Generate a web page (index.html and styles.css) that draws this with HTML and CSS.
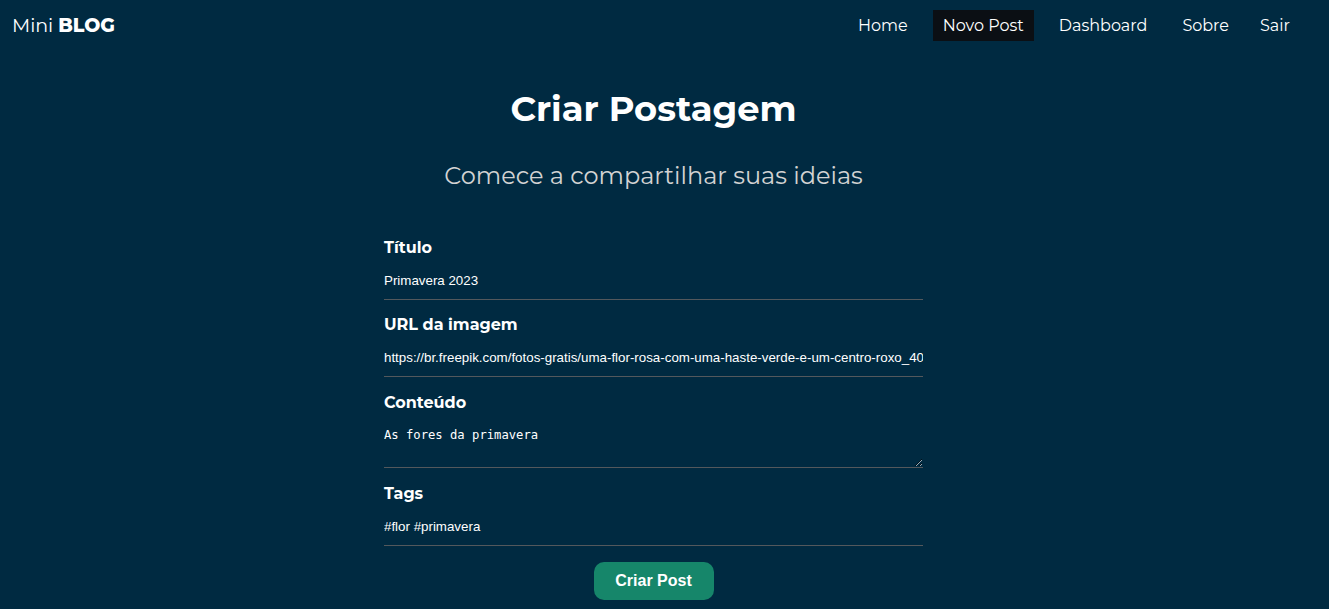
FILE: index.html
```html
<!DOCTYPE html>
<html lang="pt-BR">
<head>
<meta charset="utf-8">
<title>Mini Blog - Criar Postagem</title>
<link rel="stylesheet" href="styles.css">
</head>
<body>
<nav class="navbar">
  <a class="brand" href="#">Mini <strong>BLOG</strong></a>
  <ul class="nav-links">
    <li><a href="#">Home</a></li>
    <li><a class="active" href="#">Novo Post</a></li>
    <li><a href="#">Dashboard</a></li>
    <li><a href="#">Sobre</a></li>
    <li><a class="logout" href="#">Sair</a></li>
  </ul>
</nav>
<main class="page">
  <h1 class="title">Criar Postagem</h1>
  <p class="subtitle">Comece a compartilhar suas ideias</p>
  <form class="post-form">
    <label class="field">
      <span class="label">Título</span>
      <input class="input" type="text" value="Primavera 2023">
    </label>
    <label class="field">
      <span class="label">URL da imagem</span>
      <input class="input" type="text" value="https://br.freepik.com/fotos-gratis/uma-flor-rosa-com-uma-haste-verde-e-um-centro-roxo_40">
    </label>
    <label class="field">
      <span class="label">Conteúdo</span>
      <textarea class="textarea">As fores da primavera</textarea>
    </label>
    <label class="field">
      <span class="label">Tags</span>
      <input class="input" type="text" value="#flor #primavera">
    </label>
    <button class="btn" type="button">Criar Post</button>
  </form>
</main>
</body>
</html>
```
FILE: styles.css
```css
* { box-sizing: border-box; }

body {
  margin: 0;
  background: #002a41;
  color: #fff;
  font-family: "Montserrat", "DejaVu Sans", sans-serif;
}

.navbar {
  display: flex;
  justify-content: space-between;
  align-items: center;
  height: 50px;
  padding: 0 29px 0 12px;
}

.brand {
  color: #fff;
  text-decoration: none;
  font-size: 19px;
}

.brand strong { font-weight: 800; }

.nav-links {
  display: flex;
  list-style: none;
  margin: 0;
  padding: 0;
  gap: 15px;
}

.nav-links a {
  display: block;
  color: #fff;
  text-decoration: none;
  font-size: 16px;
  line-height: 19px;
  padding: 6px 10px;
}

.nav-links a.logout { padding-left: 6px; }

.nav-links a.active { background: #0b0f14; }

.page {
  padding: 37px 22px 0 0;
  text-align: center;
}

.title {
  margin: 0;
  font-size: 35.3px;
  line-height: 44px;
  font-weight: 700;
}

.subtitle {
  margin: 30px 0 0;
  font-size: 24px;
  line-height: 29px;
  color: #d3d3d3;
  font-weight: 400;
}

.post-form {
  width: 539px;
  margin: 48px auto 0;
  display: flex;
  flex-direction: column;
  text-align: left;
}

.field {
  display: flex;
  flex-direction: column;
  gap: 2px;
  margin-bottom: 16px;
}

.field:first-child { margin-bottom: 15px; }

.label {
  font-size: 16px;
  line-height: 20px;
  font-weight: 700;
}

.input,
.textarea {
  width: 100%;
  background: transparent;
  border: 0;
  border-bottom: 1px solid #53585c;
  color: #fff;
  outline: none;
  padding: 0;
}

.input {
  height: 40px;
  padding-top: 1px;
  font-family: "Liberation Sans", Arial, sans-serif;
  font-size: 13.33px;
}

.textarea {
  height: 53px;
  padding-top: 12px;
  font-family: "DejaVu Sans Mono", monospace;
  font-size: 12.2px;
  line-height: 16px;
}

.btn {
  align-self: center;
  width: 120px;
  height: 38px;
  border: 0;
  border-radius: 10px;
  background: #16866a;
  color: #fff;
  font-family: "Liberation Sans", Arial, sans-serif;
  font-weight: 700;
  font-size: 16px;
  cursor: pointer;
}
```
